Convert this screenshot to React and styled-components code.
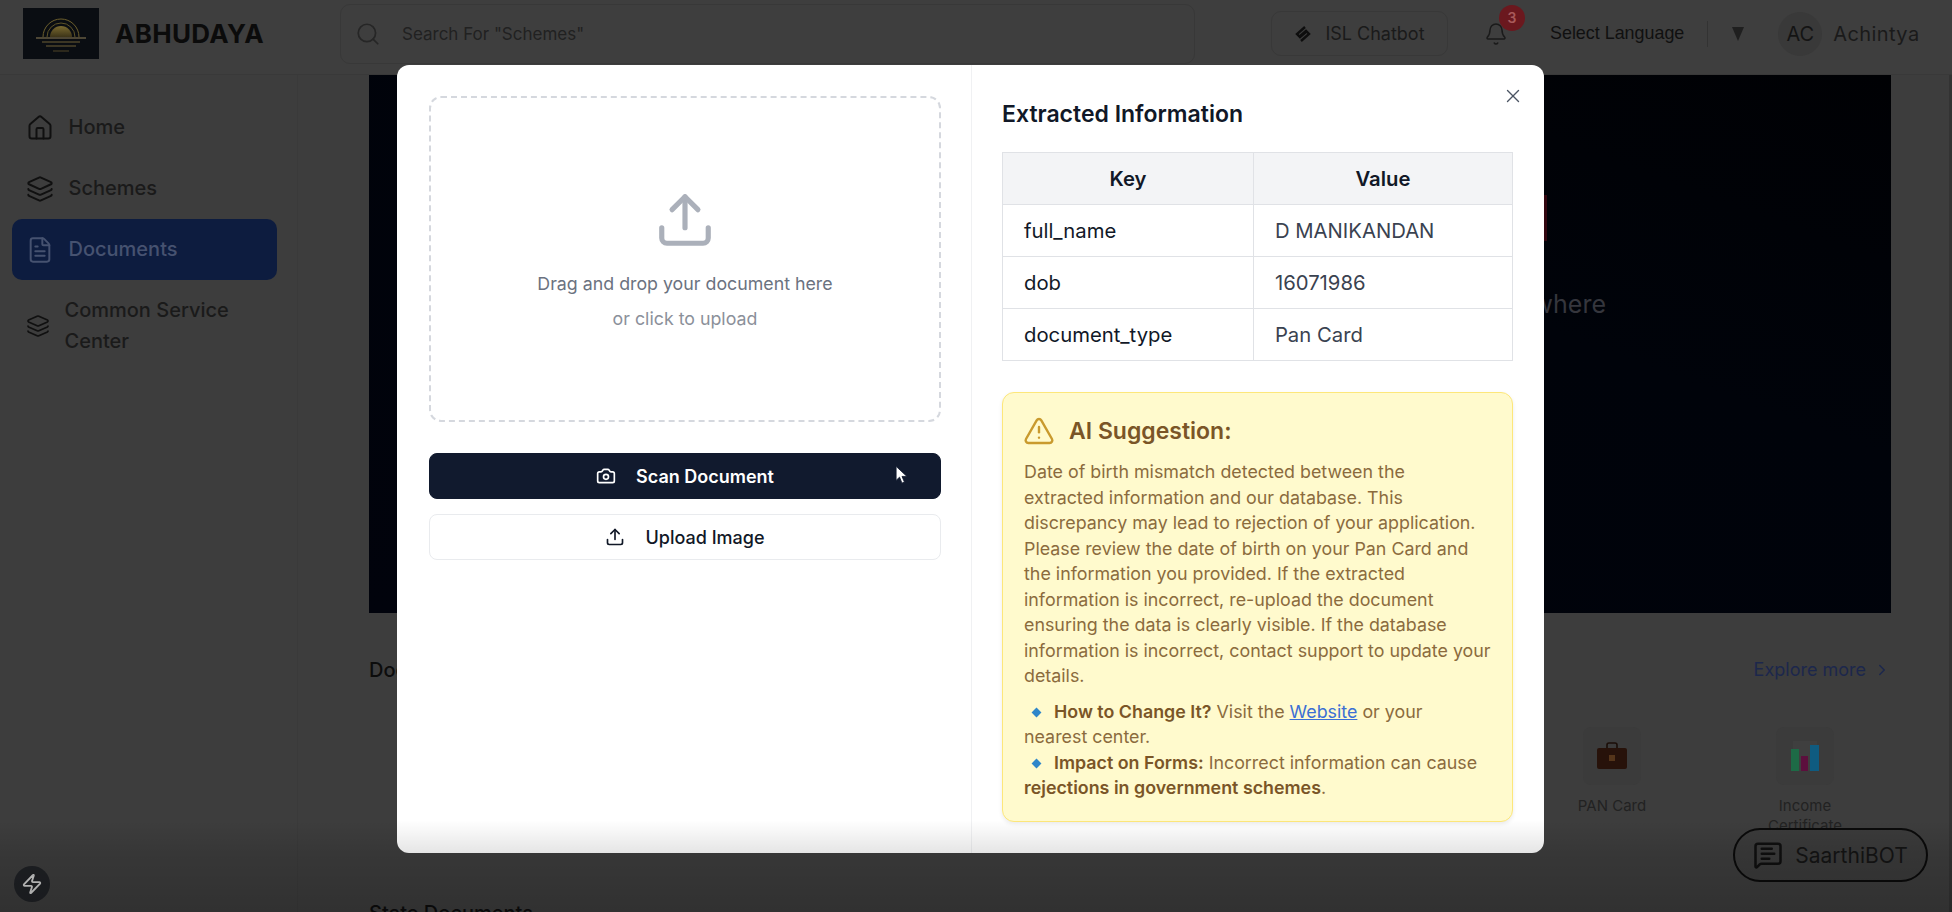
import React from 'react';
import styled, { createGlobalStyle } from 'styled-components';
import {
  Bell,
  Camera,
  ChevronRight,
  FileText,
  House,
  Layers,
  MessageSquareText,
  Search,
  TriangleAlert,
  Upload,
  X,
  Zap,
} from 'lucide-react';

const GlobalStyle = createGlobalStyle`
  html, body {
    margin: 0;
    height: 100%;
    overflow: hidden;
    background: #3d3d3d;
    font-family: Inter, 'Liberation Sans', sans-serif;
  }
  * { box-sizing: border-box; }
`;

const Page = styled.div`
  position: relative;
  width: 1952px;
  height: 912px;
  overflow: hidden;
  background: #3d3d3d;
  display: flex;
  flex-direction: column;
`;

const Topbar = styled.header`
  height: 75px;
  flex: none;
  display: flex;
  align-items: center;
  padding: 0 0 7px 23px;
  border-bottom: 1px solid #393939;
  background: #3e3e3e;
`;

const Brand = styled.div`
  width: 317px;
  flex: none;
  display: flex;
  align-items: center;
  gap: 16px;
`;

const BrandName = styled.span`
  font-size: 26px;
  font-weight: 700;
  letter-spacing: 0.3px;
  color: #0b0b0b;
`;

const SearchBox = styled.div`
  width: 855px;
  height: 60px;
  flex: none;
  display: flex;
  align-items: center;
  gap: 21px;
  padding: 0 14px;
  border: 1px solid #383838;
  border-radius: 10px;
  font-size: 17px;
  color: #212121;
`;

const ChatbotBtn = styled.div`
  width: 177px;
  height: 45px;
  flex: none;
  margin-left: 76px;
  display: flex;
  align-items: center;
  justify-content: center;
  gap: 13px;
  border: 1px solid #383838;
  border-radius: 10px;
  font-size: 18px;
  color: #1a1a1a;
`;

const BellWrap = styled.div`
  position: relative;
  margin-left: 36px;
  display: flex;
  color: #1a1a1a;
`;

const Badge = styled.span`
  position: absolute;
  top: -17px;
  left: 15px;
  width: 26px;
  height: 26px;
  border-radius: 50%;
  background: #6b181e;
  color: #a85a5a;
  font-size: 14px;
  font-weight: 600;
  display: flex;
  align-items: center;
  justify-content: center;
`;

const LangLabel = styled.span`
  flex: none;
  margin-left: 42px;
  font-family: 'Liberation Sans', Arial, sans-serif;
  font-size: 17.9px;
  white-space: nowrap;
  color: #101010;
`;

const Divider = styled.span`
  width: 1px;
  height: 26px;
  flex: none;
  margin-left: 23px;
  background: #333;
`;

const Caret = styled.span`
  flex: none;
  margin-left: 24px;
  width: 0;
  height: 0;
  border-left: 6px solid transparent;
  border-right: 6px solid transparent;
  border-top: 14px solid #1f1f1f;
`;

const Avatar = styled.div`
  width: 44px;
  height: 44px;
  flex: none;
  margin-left: 34px;
  border-radius: 50%;
  background: #393939;
  display: flex;
  align-items: center;
  justify-content: center;
  font-size: 20px;
  color: #141414;
`;

const UserName = styled.span`
  flex: none;
  margin-left: 11px;
  font-size: 20px;
  letter-spacing: 0.4px;
  color: #1a1a1a;
`;

const Body = styled.div`
  flex: 1;
  display: flex;
  min-height: 0;
`;

const Sidebar = styled.aside`
  width: 298px;
  flex: none;
  padding: 22px 20px 0 12px;
  border-right: 1px solid #3a3a3a;
`;

const NavItem = styled.div`
  min-height: 61px;
  display: flex;
  align-items: center;
  gap: 14.5px;
  padding: 15px 14px;
  border-radius: 10px;
  font-size: 20px;
  font-weight: 500;
  line-height: 31px;
  background: ${(p) => (p.$active ? '#0d1c3f' : 'transparent')};
  color: ${(p) => (p.$active ? '#465270' : '#1a1a1a')};
  svg {
    flex: none;
    color: ${(p) => (p.$active ? '#465270' : '#101010')};
  }
`;

const Main = styled.main`
  flex: 1;
  min-width: 0;
  padding-left: 71px;
  padding-right: 61px;
`;

const Hero = styled.section`
  position: relative;
  height: 538px;
  display: flex;
  align-items: flex-start;
  justify-content: flex-end;
  padding: 214px 285px 0 0;
  background: linear-gradient(200deg, #000104 0%, #00030a 35%, #01030c 100%);
  color: #35363d;
  font-size: 25px;
`;

const HeroMark = styled.span`
  position: absolute;
  left: 1175px;
  top: 120px;
  width: 3px;
  height: 46px;
  background: #33060f;
`;

const SectionRow = styled.div`
  height: 114px;
  display: flex;
  align-items: flex-start;
  justify-content: space-between;
  padding-top: 43px;
`;

const SectionTitle = styled.h2`
  margin: 0;
  font-size: 20px;
  line-height: 28px;
  font-weight: 500;
  color: #0c0c0c;
`;

const ExploreLink = styled.span`
  display: flex;
  align-items: center;
  gap: 7px;
  line-height: 28px;
  font-size: 18px;
  color: #1c274c;
`;

const TileRow = styled.div`
  height: 172px;
  display: flex;
  justify-content: flex-end;
  gap: 63px;
  padding-right: 21px;
`;

const Tile = styled.div`
  width: 130px;
  display: flex;
  flex-direction: column;
  align-items: center;
  text-align: center;
  font-size: 15px;
  line-height: 20px;
  color: #222;
`;

const TileIcon = styled.div`
  width: 58px;
  height: 58px;
  margin-bottom: 11px;
  border-radius: 8px;
  background: #3b3b3b;
  display: flex;
  align-items: center;
  justify-content: center;
`;

const Backdrop = styled.div`
  position: absolute;
  inset: 0;
  padding: 65px 0 0 397px;
`;

const Modal = styled.div`
  width: 1147px;
  height: 788px;
  display: grid;
  grid-template-columns: 575px 572px;
  background: #fff;
  border-radius: 12px;
  overflow: hidden;
`;

const LeftCol = styled.div`
  padding: 31px 30px 0 32px;
  border-right: 1px solid #f0f1f3;
  display: flex;
  flex-direction: column;
`;

const DropZone = styled.div`
  height: 326px;
  display: flex;
  flex-direction: column;
  align-items: center;
  justify-content: center;
  padding-top: 6px;
  border: 2px dashed #d5d8de;
  border-radius: 12px;
  font-size: 17.8px;
  line-height: 35px;
  color: #6b7280;
  svg {
    color: #abb0ba;
    margin-bottom: 15px;
  }
`;

const Hint = styled.span`
  color: #8b909a;
`;

const ActionBtn = styled.div`
  position: relative;
  height: 46px;
  display: flex;
  align-items: center;
  justify-content: center;
  gap: 20px;
  border-radius: 8px;
  font-size: 18px;
  font-weight: ${(p) => (p.$primary ? 600 : 500)};
  margin-top: ${(p) => (p.$primary ? '31px' : '15px')};
  background: ${(p) => (p.$primary ? '#111a2e' : '#fff')};
  color: ${(p) => (p.$primary ? '#fff' : '#111827')};
  border: 1px solid ${(p) => (p.$primary ? '#111a2e' : '#e9ebee')};
`;

const Pointer = styled.svg`
  position: absolute;
  left: 465px;
  top: 11px;
`;

const RightCol = styled.div`
  position: relative;
  padding: 32px 31px 0 30px;
`;

const CloseBtn = styled.div`
  position: absolute;
  top: 20px;
  right: 20px;
  display: flex;
  color: #4b5563;
`;

const Heading = styled.h2`
  margin: 0 0 20px;
  font-size: 23px;
  line-height: 35px;
  font-weight: 600;
  color: #111827;
`;

const InfoTable = styled.table`
  width: 100%;
  border-collapse: collapse;
  table-layout: fixed;
  font-size: 20.3px;
  color: #111827;
`;

const Th = styled.th`
  height: 52px;
  border: 1px solid #e0e2e6;
  background: #f3f4f6;
  font-weight: 600;
`;

const Td = styled.td`
  height: 52px;
  padding: 0 21px;
  border: 1px solid #e0e2e6;
  color: ${(p) => (p.$muted ? '#3a4250' : '#111827')};
`;

const Alert = styled.div`
  height: 430px;
  margin-top: 31px;
  padding: 22px 14px 16px 21px;
  background: #fffacd;
  border: 1.5px solid #fde77a;
  border-radius: 12px;
  box-shadow: 0 2px 4px rgba(0, 0, 0, 0.08);
  font-size: 17.85px;
  line-height: 25.5px;
  color: #8b6b3d;
`;

const AlertHead = styled.div`
  display: flex;
  align-items: center;
  gap: 14px;
  margin-bottom: 12px;
  font-size: 23px;
  line-height: 32px;
  font-weight: 600;
  color: #7a5527;
  svg {
    margin-left: -1px;
    color: #c99a2e;
  }
`;

const AlertText = styled.div`
  margin-bottom: 10px;
`;

const AlertLine = styled.div`
  white-space: nowrap;
`;

const Strong = styled.strong`
  font-weight: 600;
  color: #7a5527;
`;

const Bullet = styled.span`
  display: inline-block;
  width: 7px;
  height: 7px;
  margin: 0 14px 2px 9px;
  background: #2f86c9;
  transform: rotate(45deg);
`;

const DocLink = styled.a`
  color: #3b6fd4;
  text-decoration: underline;
`;

const BotButton = styled.div`
  position: absolute;
  left: 1733px;
  top: 828px;
  width: 195px;
  height: 54px;
  display: flex;
  align-items: center;
  justify-content: center;
  gap: 12px;
  background: #3b3b3b;
  border: 2px solid #0a0a0a;
  border-radius: 27px;
  font-size: 21px;
  color: #141414;
`;

const DevBadge = styled.div`
  position: absolute;
  left: 14px;
  top: 866px;
  width: 36px;
  height: 36px;
  border-radius: 50%;
  background: #1f2125;
  color: #d0d0d0;
  display: flex;
  align-items: center;
  justify-content: center;
`;

const BottomFade = styled.div`
  position: absolute;
  left: 0;
  right: 0;
  bottom: 0;
  height: 92px;
  background: linear-gradient(rgba(0, 0, 0, 0), rgba(0, 0, 0, 0.1) 36%, rgba(0, 0, 0, 0.2));
  pointer-events: none;
`;

const Scrollbar = styled.div`
  position: absolute;
  top: 75px;
  right: 0;
  bottom: 0;
  width: 3px;
  background: #333;
`;

const LogoMark = () => (
  <svg width="76" height="51" viewBox="0 0 76 51">
    <defs>
      <linearGradient id="sun" x1="0" y1="0" x2="0" y2="1">
        <stop offset="0" stopColor="#7a6a30" />
        <stop offset="1" stopColor="#3d3418" />
      </linearGradient>
    </defs>
    <rect width="76" height="51" fill="#0a0d12" />
    <path d="M27 29a11 11 0 0 1 22 0z" fill="url(#sun)" />
    <path d="M24 29a14 14 0 0 1 28 0" fill="none" stroke="#5f5428" strokeWidth="1" />
    <path d="M20 29a18 18 0 0 1 36 0" fill="none" stroke="#6d5f2d" strokeWidth="1" />
    <path d="M13 30h50" stroke="#8f8058" strokeWidth="1.2" />
    <path d="M19 34h38M23 38h30" stroke="#6f6136" strokeWidth="1" />
    <path d="M30 43h16" stroke="#4f4526" strokeWidth="1" />
  </svg>
);

const IslIcon = () => (
  <svg width="18" height="18" viewBox="0 0 18 18" fill="none" stroke="#0e0e0e" strokeWidth="2.4">
    <path d="M11 2 3 9l3 3 7-6" />
    <path d="M7 16l8-7-3-3-7 6" />
  </svg>
);

const BriefcaseIcon = () => (
  <svg width="32" height="28" viewBox="0 0 32 28">
    <path d="M11 6V3a2 2 0 0 1 2-2h6a2 2 0 0 1 2 2v3" fill="none" stroke="#1b0e08" strokeWidth="1.6" />
    <rect x="1" y="6" width="30" height="21" rx="2" fill="#27120a" />
    <rect x="13" y="13" width="6" height="6" fill="#55351a" />
  </svg>
);

const BarsIcon = () => (
  <svg width="30" height="32" viewBox="0 0 30 32">
    <rect x="3" y="1" width="24" height="30" fill="#474747" opacity="0.35" />
    <rect x="1" y="9" width="8" height="22" fill="#1d6a46" />
    <rect x="11" y="16" width="7" height="15" fill="#5c0f3d" />
    <rect x="20" y="5" width="9" height="26" fill="#0f5b80" />
  </svg>
);

const ArrowCursor = () => (
  <Pointer width="13" height="20" viewBox="0 0 12 18">
    <path d="M1 1v13l3.2-3 2.2 5.5 2.3-1-2.2-5.2H11z" fill="#fff" stroke="#111a2e" strokeWidth="0.8" />
  </Pointer>
);

const rows = [
  ['full_name', 'D MANIKANDAN'],
  ['dob', '16071986'],
  ['document_type', 'Pan Card'],
];

const suggestionLines = [
  'Date of birth mismatch detected between the',
  'extracted information and our database. This',
  'discrepancy may lead to rejection of your application.',
  'Please review the date of birth on your Pan Card and',
  'the information you provided. If the extracted',
  'information is incorrect, re-upload the document',
  'ensuring the data is clearly visible. If the database',
  'information is incorrect, contact support to update your',
  'details.',
];

const App = () => (
  <Page>
    <GlobalStyle />
    <Topbar>
      <Brand>
        <LogoMark />
        <BrandName>ABHUDAYA</BrandName>
      </Brand>
      <SearchBox>
        <Search size={26} color="#262626" strokeWidth={1.6} />
        <span>Search For "Schemes"</span>
      </SearchBox>
      <ChatbotBtn>
        <IslIcon />
        ISL Chatbot
      </ChatbotBtn>
      <BellWrap>
        <Bell size={24} strokeWidth={1.5} />
        <Badge>3</Badge>
      </BellWrap>
      <LangLabel>Select Language</LangLabel>
      <Divider />
      <Caret />
      <Avatar>AC</Avatar>
      <UserName>Achintya</UserName>
    </Topbar>
    <Body>
      <Sidebar>
        <NavItem>
          <House size={28} strokeWidth={1.7} />
          Home
        </NavItem>
        <NavItem>
          <Layers size={28} strokeWidth={1.7} />
          Schemes
        </NavItem>
        <NavItem $active>
          <FileText size={28} strokeWidth={1.7} />
          Documents
        </NavItem>
        <NavItem>
          <Layers size={24} strokeWidth={1.7} />
          Common Service Center
        </NavItem>
      </Sidebar>
      <Main>
        <Hero>
          <HeroMark />
          anywhere
        </Hero>
        <SectionRow>
          <SectionTitle>Documents</SectionTitle>
          <ExploreLink>
            Explore more
            <ChevronRight size={18} />
          </ExploreLink>
        </SectionRow>
        <TileRow>
          <Tile>
            <TileIcon>
              <BriefcaseIcon />
            </TileIcon>
            PAN Card
          </Tile>
          <Tile>
            <TileIcon>
              <BarsIcon />
            </TileIcon>
            Income Certificate
          </Tile>
        </TileRow>
        <SectionTitle>State Documents</SectionTitle>
      </Main>
    </Body>
    <BotButton>
      <MessageSquareText size={30} strokeWidth={2} color="#0f0f0f" />
      SaarthiBOT
    </BotButton>
    <DevBadge>
      <Zap size={22} strokeWidth={2} />
    </DevBadge>
    <Scrollbar />
    <Backdrop>
      <Modal>
        <LeftCol>
          <DropZone>
            <Upload size={62} strokeWidth={2} />
            <span>Drag and drop your document here</span>
            <Hint>or click to upload</Hint>
          </DropZone>
          <ActionBtn $primary>
            <Camera size={20} />
            Scan Document
            <ArrowCursor />
          </ActionBtn>
          <ActionBtn>
            <Upload size={20} />
            Upload Image
          </ActionBtn>
        </LeftCol>
        <RightCol>
          <CloseBtn>
            <X size={22} strokeWidth={1.5} />
          </CloseBtn>
          <Heading>Extracted Information</Heading>
          <InfoTable>
            <colgroup>
              <col width="49.2%" />
              <col width="50.8%" />
            </colgroup>
            <thead>
              <tr>
                <Th>Key</Th>
                <Th>Value</Th>
              </tr>
            </thead>
            <tbody>
              {rows.map(([key, value]) => (
                <tr key={key}>
                  <Td>{key}</Td>
                  <Td $muted>{value}</Td>
                </tr>
              ))}
            </tbody>
          </InfoTable>
          <Alert>
            <AlertHead>
              <TriangleAlert size={32} strokeWidth={1.8} />
              AI Suggestion:
            </AlertHead>
            <AlertText>
              {suggestionLines.map((line) => (
                <AlertLine key={line}>{line}</AlertLine>
              ))}
            </AlertText>
            <AlertLine>
              <Bullet />
              <Strong>How to Change It?</Strong> Visit the <DocLink href="#">Website</DocLink> or your
            </AlertLine>
            <AlertLine>nearest center.</AlertLine>
            <AlertLine>
              <Bullet />
              <Strong>Impact on Forms:</Strong> Incorrect information can cause
            </AlertLine>
            <AlertLine>
              <Strong>rejections in government schemes</Strong>.
            </AlertLine>
          </Alert>
        </RightCol>
      </Modal>
    </Backdrop>
    <BottomFade />
  </Page>
);

export default App;
